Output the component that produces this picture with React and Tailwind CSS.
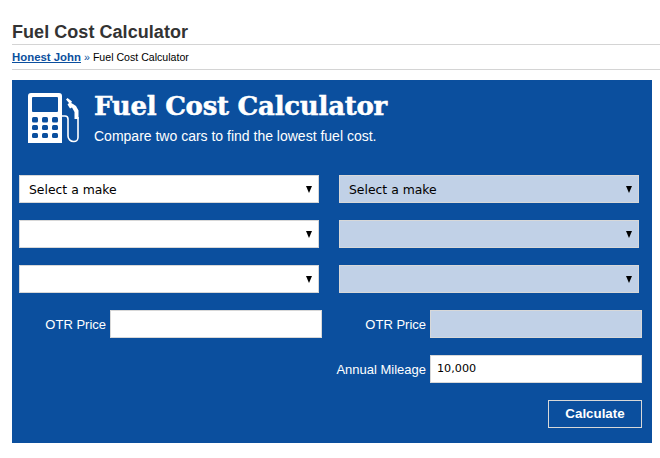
const sans = "font-['Liberation_Sans',Arial,sans-serif]";
const verdana = "font-['DejaVu_Sans',Verdana,sans-serif]";

function Pump() {
  return (
    <svg width="52" height="50" viewBox="0 0 52 50" fill="none" className="shrink-0">
      <path fillRule="evenodd" clipRule="evenodd" fill="#fff" d="M3 0h28a3 3 0 0 1 3 3v47H0V3a3 3 0 0 1 3-3zM5 4a1 1 0 0 0-1 1v13a1 1 0 0 0 1 1h24a1 1 0 0 0 1-1V5a1 1 0 0 0-1-1z" />
      <g fill="#0b4f9e">
        <rect x="4" y="24" width="6" height="5.500" rx="1.500" />
        <rect x="14" y="24" width="6" height="5.500" rx="1.500" />
        <rect x="24" y="24" width="6" height="5.500" rx="1.500" />
        <rect x="4" y="32" width="6" height="5" rx="1.500" />
        <rect x="14" y="32" width="6" height="5" rx="1.500" />
        <rect x="24" y="32" width="6" height="5" rx="1.500" />
        <rect x="4" y="40" width="6" height="5" rx="1.500" />
        <rect x="14" y="40" width="6" height="5" rx="1.500" />
        <rect x="24" y="40" width="6" height="5" rx="1.500" />
      </g>
      <path stroke="#fff" strokeWidth="1.600" d="M34 23h3a3 3 0 0 1 3 3v17a5.500 5.500 0 0 0 5.500 5.500h.5a4 4 0 0 0 4-4V24" />
      <path fill="#fff" d="M38 6.500l1.500-1.500 4.500 3.500-.8 1.500 1.800 1 3 2 2.500 4.500V26h-4v-7l-2.500-4.500-2 1-2.500-4 1.500-1.500z" />
    </svg>
  );
}

function Select({ text, tinted }) {
  return (
    <div className={`flex-1 h-7 flex items-center justify-between pl-[9px] pr-[6px] border border-[#d8d8d8] text-[12.4px] text-black ${verdana} ${tinted ? "bg-[#c1d1e7]" : "bg-white"}`}>
      <span className="pt-[2px]">{text}</span>
      <span className="w-0 h-0 border-x-[3.500px] border-x-transparent border-t-[7px] border-t-black" />
    </div>
  );
}

function Field({ label, value, tinted }) {
  return (
    <div className="flex items-center justify-end gap-1 flex-1">
      {label && <span className={`pt-[1px] text-[13px] text-white ${sans}`}>{label}</span>}
      <div className={`w-[212px] h-7 flex items-center pl-[6px] pt-[1px] border border-[#d8d8d8] text-[11.2px] text-black ${verdana} ${tinted ? "bg-[#c1d1e7]" : "bg-white"}`}>
        {value}
      </div>
    </div>
  );
}

export default function App() {
  return (
    <div className={`w-[660px] h-[458px] bg-white px-3 ${sans}`}>
      <h1 className="pt-[20px] h-[45px] mr-[-12px] border-b border-[#d4d4d4] text-[18px] tracking-[0.05px] leading-[24px] font-bold text-[#333]">Fuel Cost Calculator</h1>
      <div className="h-[25px] pt-[2px] mr-[-12px] flex items-center border-b border-[#d4d4d4] text-[10.6px] text-black">
        <a className="font-bold underline text-[#0b4f9e] text-[11.4px]">Honest John</a>
        <span className="ml-[3px] text-[#0b4f9e]">»</span>
        <span className="ml-[3px]">Fuel Cost Calculator</span>
      </div>
      <div className="mt-[10px] w-[640px] h-[363px] bg-[#0b4f9e] pl-[7px] pr-[10px]">
        <div className="h-[95px] pt-[13px] pl-[9px] flex items-start">
          <Pump />
          <div className="ml-[14px] text-white">
            <div className="font-['DejaVu_Serif',serif] font-bold text-[26px] leading-[27px] tracking-[-0.25px] [-webkit-text-stroke:0.5px_white]">Fuel Cost Calculator</div>
            <div className="mt-[8px] text-[14px] leading-[16px]">Compare two cars to find the lowest fuel cost.</div>
          </div>
        </div>
        <div className="flex flex-col gap-[17px] pr-[3px]">
          <div className="flex gap-5"><Select text="Select a make" /><Select text="Select a make" tinted /></div>
          <div className="flex gap-5"><Select /><Select tinted /></div>
          <div className="flex gap-5"><Select /><Select tinted /></div>
        </div>
        <div className="mt-[17px] flex flex-col gap-[17px]">
          <div className="flex justify-between">
            <div className="w-[303px] flex"><Field label="OTR Price" /></div>
            <div className="w-[303px] flex"><Field label="OTR Price" tinted /></div>
          </div>
          <div className="flex justify-end">
            <Field label="Annual Mileage" value="10,000" />
          </div>
          <div className="flex justify-end">
            <button className={`w-[94px] h-7 border border-[#d8d8d8] text-white text-[13.33px] font-bold ${sans}`}>Calculate</button>
          </div>
        </div>
      </div>
    </div>
  );
}
